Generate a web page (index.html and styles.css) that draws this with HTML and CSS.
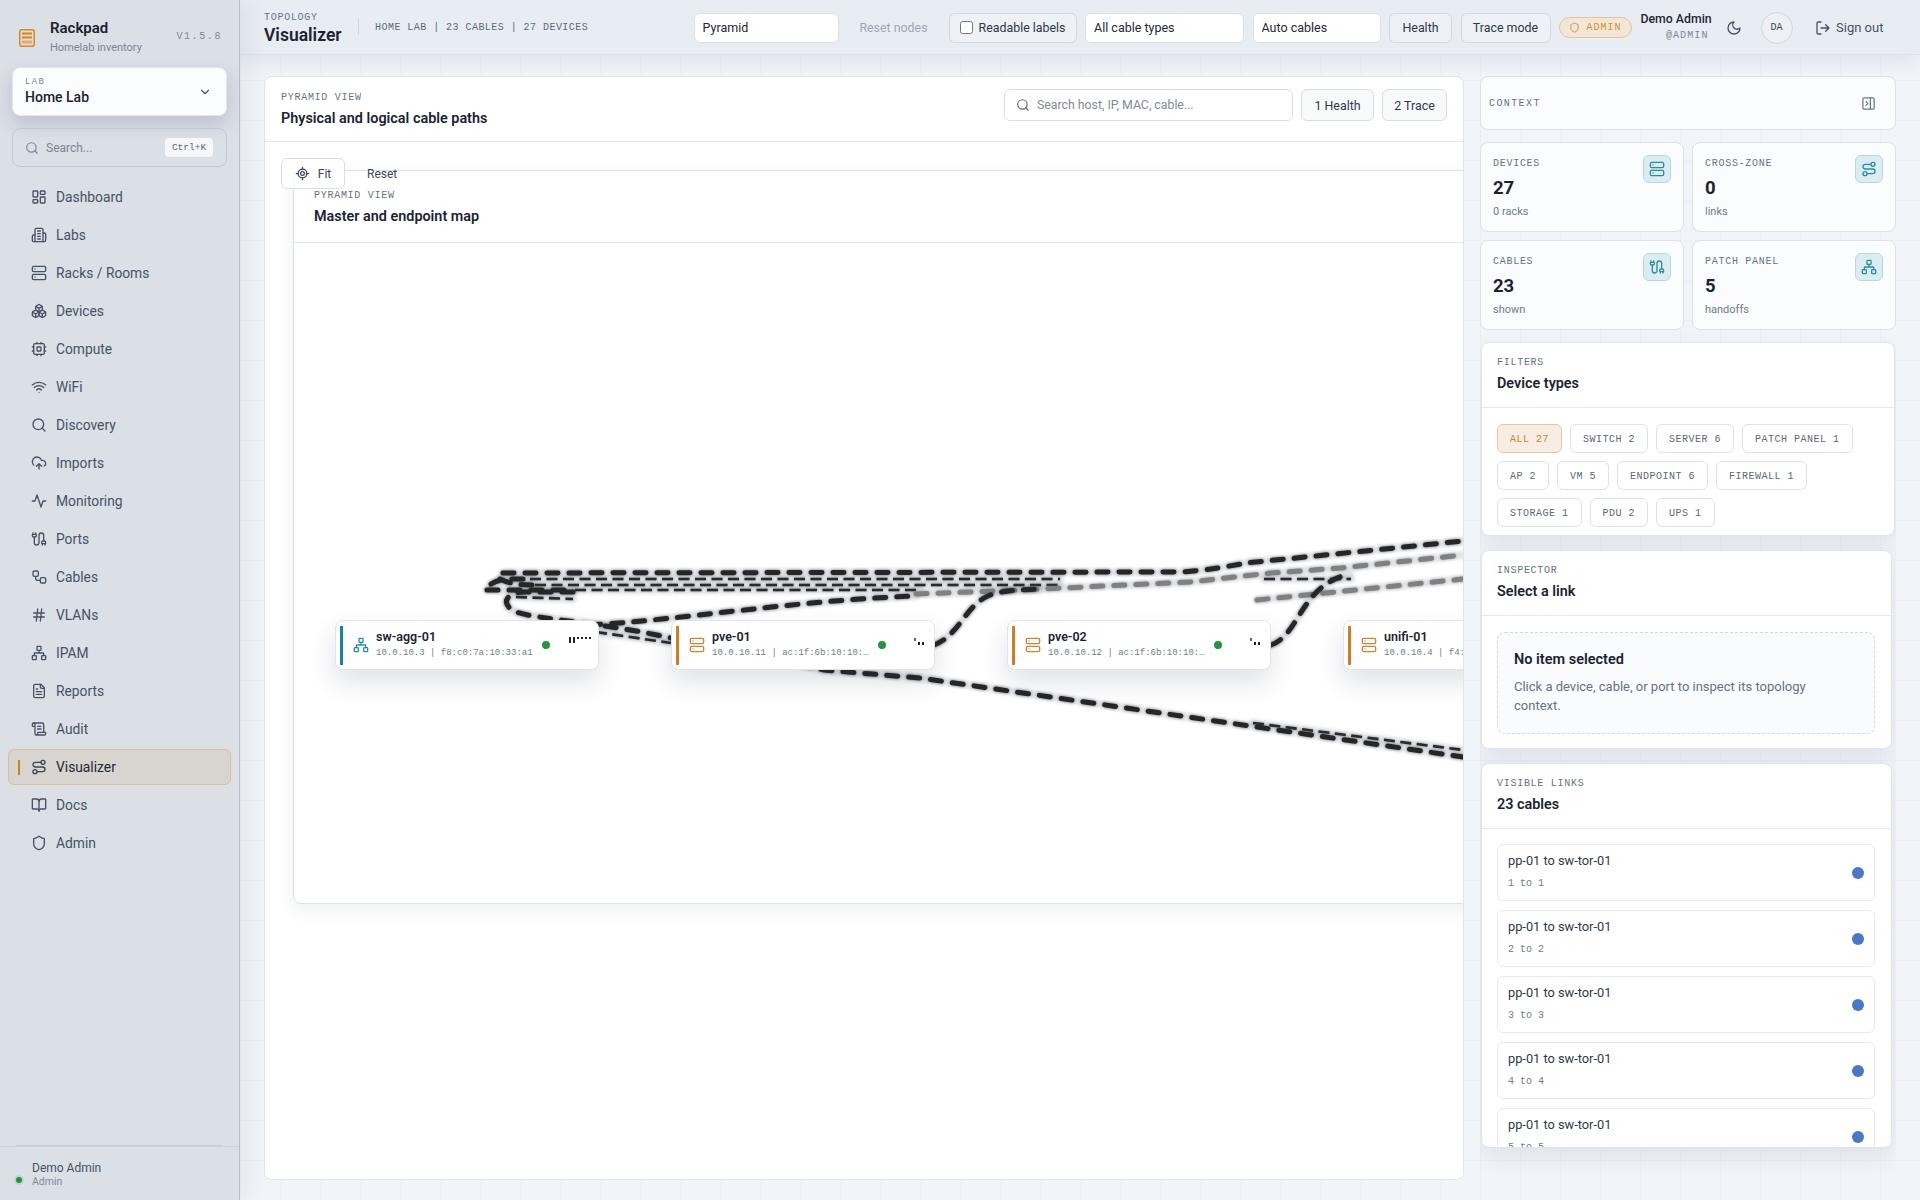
FILE: index.html
```html
<!DOCTYPE html>
<html lang="en">
<head>
<meta charset="utf-8">
<title>Rackpad - Visualizer</title>
<link rel="stylesheet" href="styles.css">
</head>
<body>
<svg class="defs" aria-hidden="true">
  <symbol id="i-dash" viewBox="0 0 24 24"><rect x="3" y="3" width="7" height="9" rx="1"/><rect x="14" y="3" width="7" height="5" rx="1"/><rect x="14" y="12" width="7" height="9" rx="1"/><rect x="3" y="16" width="7" height="5" rx="1"/></symbol>
  <symbol id="i-bld" viewBox="0 0 24 24"><path d="M6 22V4a2 2 0 0 1 2-2h8a2 2 0 0 1 2 2v18Z"/><path d="M6 12H4a2 2 0 0 0-2 2v6a2 2 0 0 0 2 2h2"/><path d="M18 9h2a2 2 0 0 1 2 2v9a2 2 0 0 1-2 2h-2"/><path d="M10 6h4M10 10h4M10 14h4M10 18h4"/></symbol>
  <symbol id="i-srv" viewBox="0 0 24 24"><rect x="2" y="2" width="20" height="8" rx="2"/><rect x="2" y="14" width="20" height="8" rx="2"/><path d="M6 6h.01M6 18h.01"/></symbol>
  <symbol id="i-box" viewBox="0 0 24 24"><path d="M2.97 12.92A2 2 0 0 0 2 14.63v3.24a2 2 0 0 0 .97 1.71l3 1.8a2 2 0 0 0 2.06 0L12 19v-5.5l-5-3-4.03 2.42Z"/><path d="m7 16.5-4.74-2.85M7 16.5l5-3M7 16.5v5.17"/><path d="M12 13.5V19l3.97 2.38a2 2 0 0 0 2.06 0l3-1.8a2 2 0 0 0 .97-1.71v-3.24a2 2 0 0 0-.97-1.71L17 10.5l-5 3Z"/><path d="m17 16.5-5-3M17 16.5l4.74-2.85M17 16.5v5.17"/><path d="M7.97 4.42A2 2 0 0 0 7 6.13v4.37l5 3 5-3V6.13a2 2 0 0 0-.97-1.71l-3-1.8a2 2 0 0 0-2.06 0l-3 1.8Z"/><path d="M12 8 7.26 5.15M12 8l4.74-2.85M12 13.5V8"/></symbol>
  <symbol id="i-cpu" viewBox="0 0 24 24"><rect x="4" y="4" width="16" height="16" rx="2"/><rect x="9" y="9" width="6" height="6" rx="1"/><path d="M15 2v2M15 20v2M2 15h2M2 9h2M20 15h2M20 9h2M9 2v2M9 20v2"/></symbol>
  <symbol id="i-wifi" viewBox="0 0 24 24"><path d="M12 20h.01M2 8.82a15 15 0 0 1 20 0M5 12.859a10 10 0 0 1 14 0M8.5 16.429a5 5 0 0 1 7 0"/></symbol>
  <symbol id="i-srch" viewBox="0 0 24 24"><circle cx="11" cy="11" r="8"/><path d="m21 21-4.3-4.3"/></symbol>
  <symbol id="i-up" viewBox="0 0 24 24"><path d="M12 13v8M4 14.899A7 7 0 1 1 15.71 8h1.79a4.5 4.5 0 0 1 2.5 8.242M8 17l4-4 4 4"/></symbol>
  <symbol id="i-act" viewBox="0 0 24 24"><path d="M22 12h-4l-3 9L9 3l-3 9H2"/></symbol>
  <symbol id="i-cable" viewBox="0 0 24 24"><path d="M17 21v-2a1 1 0 0 1-1-1v-1a2 2 0 0 1 2-2h2a2 2 0 0 1 2 2v1a1 1 0 0 1-1 1"/><path d="M19 15V6.5a1 1 0 0 0-7 0v11a1 1 0 0 1-7 0V9"/><path d="M21 21v-2h-4M3 5h4V3"/><path d="M7 5a1 1 0 0 1 1 1v1a2 2 0 0 1-2 2H4a2 2 0 0 1-2-2V6a1 1 0 0 1 1-1V3"/></symbol>
  <symbol id="i-link" viewBox="0 0 24 24"><rect x="3" y="3" width="8" height="8" rx="2"/><rect x="14" y="13" width="8" height="8" rx="2"/><path d="M7 11v3a3 3 0 0 0 3 3h4"/></symbol>
  <symbol id="i-hash" viewBox="0 0 24 24"><path d="M4 9h16M4 15h16M10 3 8 21M16 3l-2 18"/></symbol>
  <symbol id="i-net" viewBox="0 0 24 24"><rect x="16" y="16" width="6" height="6" rx="1"/><rect x="2" y="16" width="6" height="6" rx="1"/><rect x="9" y="2" width="6" height="6" rx="1"/><path d="M5 16v-3a1 1 0 0 1 1-1h12a1 1 0 0 1 1 1v3M12 12V8"/></symbol>
  <symbol id="i-file" viewBox="0 0 24 24"><path d="M15 2H6a2 2 0 0 0-2 2v16a2 2 0 0 0 2 2h12a2 2 0 0 0 2-2V7Z"/><path d="M14 2v4a2 2 0 0 0 2 2h4M10 9H8M16 13H8M16 17H8"/></symbol>
  <symbol id="i-scroll" viewBox="0 0 24 24"><path d="M15 12h-5M15 8h-5M19 17V5a2 2 0 0 0-2-2H4"/><path d="M8 21h12a2 2 0 0 0 2-2v-1a1 1 0 0 0-1-1H11a1 1 0 0 0-1 1v1a2 2 0 1 1-4 0V5a2 2 0 1 0-4 0v2a1 1 0 0 0 1 1h3"/></symbol>
  <symbol id="i-route" viewBox="0 0 24 24"><circle cx="6" cy="19" r="3"/><path d="M9 19h8.5a3.5 3.5 0 0 0 0-7h-11a3.5 3.5 0 0 1 0-7H15"/><circle cx="18" cy="5" r="3"/></symbol>
  <symbol id="i-book" viewBox="0 0 24 24"><path d="M12 7v14"/><path d="M3 18a1 1 0 0 1-1-1V4a1 1 0 0 1 1-1h5a4 4 0 0 1 4 4 4 4 0 0 1 4-4h5a1 1 0 0 1 1 1v13a1 1 0 0 1-1 1h-6a3 3 0 0 0-3 3 3 3 0 0 0-3-3z"/></symbol>
  <symbol id="i-shield" viewBox="0 0 24 24"><path d="M20 13c0 5-3.5 7.5-7.66 8.95a1 1 0 0 1-.67-.01C7.5 20.5 4 18 4 13V6a1 1 0 0 1 1-1c2 0 4.5-1.2 6.24-2.72a1.17 1.17 0 0 1 1.52 0C14.51 3.81 17 5 19 5a1 1 0 0 1 1 1z"/></symbol>
  <symbol id="i-fit" viewBox="0 0 24 24"><path d="M2 12h3M19 12h3M12 2v3M12 19v3"/><circle cx="12" cy="12" r="7"/><circle cx="12" cy="12" r="3"/></symbol>
  <symbol id="i-moon" viewBox="0 0 24 24"><path d="M12 3a6 6 0 0 0 9 9 9 9 0 1 1-9-9Z"/></symbol>
  <symbol id="i-out" viewBox="0 0 24 24"><path d="m16 17 5-5-5-5M21 12H9M9 21H5a2 2 0 0 1-2-2V5a2 2 0 0 1 2-2h4"/></symbol>
  <symbol id="i-panel" viewBox="0 0 24 24"><rect x="3" y="3" width="18" height="18" rx="2"/><path d="M15 3v18M8 9l3 3-3 3"/></symbol>
  <symbol id="i-chev" viewBox="0 0 24 24"><path d="m6 9 6 6 6-6"/></symbol>
</svg>

<div class="app">
  <aside class="sidebar">
    <div class="brand">
      <svg class="logo" viewBox="0 0 16 18"><rect x="0.75" y="0.75" width="14.5" height="16.5" rx="2" class="logo-box"/><rect x="3" y="3.5" width="10" height="2" class="logo-l1"/><rect x="3" y="7.5" width="10" height="2" class="logo-l1"/><rect x="3" y="11.5" width="10" height="3" class="logo-l2"/></svg>
      <div class="brand-text">
        <div class="brand-name">Rackpad</div>
        <div class="brand-sub">Homelab inventory</div>
      </div>
      <div class="version">V1.5.8</div>
    </div>
    <button class="lab-card" type="button">
      <span class="lab-text"><span class="lab-label">LAB</span><span class="lab-name">Home Lab</span></span>
      <svg class="ico ico-13"><use href="#i-chev"/></svg>
    </button>
    <div class="side-search">
      <svg class="ico ico-14"><use href="#i-srch"/></svg>
      <span class="side-search-text">Search...</span>
      <kbd class="kbd">Ctrl+K</kbd>
    </div>
    <nav class="nav">
      <a class="nav-item"><svg class="ico"><use href="#i-dash"/></svg>Dashboard</a>
      <a class="nav-item"><svg class="ico"><use href="#i-bld"/></svg>Labs</a>
      <a class="nav-item"><svg class="ico"><use href="#i-srv"/></svg>Racks / Rooms</a>
      <a class="nav-item"><svg class="ico"><use href="#i-box"/></svg>Devices</a>
      <a class="nav-item"><svg class="ico"><use href="#i-cpu"/></svg>Compute</a>
      <a class="nav-item"><svg class="ico"><use href="#i-wifi"/></svg>WiFi</a>
      <a class="nav-item"><svg class="ico"><use href="#i-srch"/></svg>Discovery</a>
      <a class="nav-item"><svg class="ico"><use href="#i-up"/></svg>Imports</a>
      <a class="nav-item"><svg class="ico"><use href="#i-act"/></svg>Monitoring</a>
      <a class="nav-item"><svg class="ico"><use href="#i-cable"/></svg>Ports</a>
      <a class="nav-item"><svg class="ico"><use href="#i-link"/></svg>Cables</a>
      <a class="nav-item"><svg class="ico"><use href="#i-hash"/></svg>VLANs</a>
      <a class="nav-item"><svg class="ico"><use href="#i-net"/></svg>IPAM</a>
      <a class="nav-item"><svg class="ico"><use href="#i-file"/></svg>Reports</a>
      <a class="nav-item"><svg class="ico"><use href="#i-scroll"/></svg>Audit</a>
      <a class="nav-item active"><svg class="ico"><use href="#i-route"/></svg>Visualizer</a>
      <a class="nav-item"><svg class="ico"><use href="#i-book"/></svg>Docs</a>
      <a class="nav-item"><svg class="ico"><use href="#i-shield"/></svg>Admin</a>
    </nav>
    <div class="foot-rule"></div>
    <div class="side-foot">
      <span class="foot-dot"></span>
      <div class="foot-text"><div class="foot-name">Demo Admin</div><div class="foot-role">Admin</div></div>
    </div>
  </aside>

  <div class="main">
    <header class="topbar">
      <div class="top-title">
        <div class="eyebrow">TOPOLOGY</div>
        <div class="page-name">Visualizer</div>
      </div>
      <div class="top-meta">HOME LAB | 23 CABLES | 27 DEVICES</div>
      <div class="top-controls">
        <select class="sel w-pyr"><option>Pyramid</option></select>
        <button class="ghost" type="button">Reset nodes</button>
        <label class="btn w-read"><input class="check" type="checkbox">Readable labels</label>
        <select class="sel w-types"><option>All cable types</option></select>
        <select class="sel w-auto"><option>Auto cables</option></select>
        <button class="btn w-health" type="button">Health</button>
        <button class="btn w-trace" type="button">Trace mode</button>
        <span class="role-badge"><svg class="ico ico-11"><use href="#i-shield"/></svg>ADMIN</span>
        <div class="user"><div class="user-name">Demo Admin</div><div class="user-at">@ADMIN</div></div>
        <button class="icon-btn" type="button"><svg class="ico"><use href="#i-moon"/></svg></button>
        <span class="avatar">DA</span>
        <button class="signout" type="button"><svg class="ico"><use href="#i-out"/></svg>Sign out</button>
      </div>
    </header>

    <div class="content">
      <section class="stage">
        <div class="stage-head">
          <div class="stage-heading">
            <div class="eyebrow">PYRAMID VIEW</div>
            <h2 class="panel-title">Physical and logical cable paths</h2>
          </div>
          <div class="stage-tools">
            <div class="stage-search"><svg class="ico ico-14"><use href="#i-srch"/></svg><span>Search host, IP, MAC, cable...</span></div>
            <button class="btn-light w-h1" type="button">1 Health</button>
            <button class="btn-light w-h2" type="button">2 Trace</button>
          </div>
        </div>
        <div class="canvas">
          <div class="map-panel">
            <div class="map-head">
              <div class="eyebrow">PYRAMID VIEW</div>
              <h3 class="panel-title">Master and endpoint map</h3>
            </div>
          </div>

          <svg class="cables" viewBox="265 142 1198 1037">
            <defs>
              <path id="c1" d="M503 573L1180 572C1210 570 1230 566 1246 563L1355 552L1463 541"/>
              <path id="c2" d="M530 579L1060 579"/>
              <path id="c2b" d="M1264 579L1351 579"/>
              <path id="c3" d="M535 585L1060 585"/>
              <path id="f1" d="M491 584C500 578 510 579 530 579"/>
              <path id="f2" d="M500 579C510 584 520 585 535 585"/>
              <path id="c4" d="M487 590L575 590"/>
              <path id="c4b" d="M575 590L920 590"/>
              <path id="c5" d="M573 592L525 592C505 592 500 605 516 612C540 620 600 622 671 638L824 670L920 678L1463 757"/>
              <path id="c5b" d="M516 597L573 599"/>
              <path id="c6" d="M596 632L671 643"/>
              <path id="c6b" d="M1253 723L1463 750"/>
              <path id="c7" d="M590 625C680 620 800 600 916 596"/>
              <path id="c8" d="M934 645C960 635 965 605 990 595C1005 590 1020 590 1040 589"/>
              <path id="c9" d="M1271 645C1300 635 1300 585 1350 574"/>
              <path id="g1" d="M916 594L1020 590L1190 582L1271 573L1341 568L1463 555"/>
              <path id="g2" d="M1257 600L1463 579"/>
            </defs>
            <g class="halo">
              <use href="#c1"/><use href="#c2"/><use href="#c2b"/><use href="#c3"/><use href="#f1"/><use href="#f2"/><use href="#c4"/><use href="#c4b"/><use href="#c5"/><use href="#c5b"/><use href="#c6"/><use href="#c6b"/><use href="#c7"/><use href="#c8"/><use href="#c9"/><use href="#g1"/><use href="#g2"/>
            </g>
            <g class="wire-thin">
              <use href="#c2"/><use href="#c2b"/><use href="#c3"/><use href="#c4b"/><use href="#c5b"/><use href="#c6"/><use href="#c6b"/>
            </g>
            <g class="wire-gray">
              <use href="#g1"/><use href="#g2"/>
            </g>
            <g class="wire">
              <use href="#c1"/><use href="#f1"/><use href="#f2"/><use href="#c4"/><use href="#c5"/><use href="#c7"/><use href="#c8"/><use href="#c9"/>
            </g>
          </svg>

          <div class="node n1 teal">
            <span class="node-bar"></span>
            <svg class="ico node-ico"><use href="#i-net"/></svg>
            <div class="node-body"><div class="node-name">sw-agg-01</div><div class="node-sub">10.0.10.3 | f8:c0:7a:10:33:a1</div></div>
            <span class="node-dot"></span>
            <svg class="ticks" viewBox="0 0 24 8"><path class="tick-l" d="M1 0v6M5 0v6"/><path class="tick-s" d="M9 0v2M13 0v2M17 0v2M21 0v2"/></svg>
          </div>
          <div class="node n2 amber">
            <span class="node-bar"></span>
            <svg class="ico node-ico"><use href="#i-srv"/></svg>
            <div class="node-body"><div class="node-name">pve-01</div><div class="node-sub">10.0.10.11 | ac:1f:6b:10:10:10</div></div>
            <span class="node-dot"></span>
            <svg class="ticks ticks-s" viewBox="0 0 14 8"><path class="tick-g" d="M1 1.5h2"/><path class="tick-l" d="M6 4v3M10 4v3"/></svg>
          </div>
          <div class="node n3 amber">
            <span class="node-bar"></span>
            <svg class="ico node-ico"><use href="#i-srv"/></svg>
            <div class="node-body"><div class="node-name">pve-02</div><div class="node-sub">10.0.10.12 | ac:1f:6b:10:10:11</div></div>
            <span class="node-dot"></span>
            <svg class="ticks ticks-s" viewBox="0 0 14 8"><path class="tick-g" d="M1 1.5h2"/><path class="tick-l" d="M6 4v3M10 4v3"/></svg>
          </div>
          <div class="node n4 amber">
            <span class="node-bar"></span>
            <svg class="ico node-ico"><use href="#i-srv"/></svg>
            <div class="node-body"><div class="node-name">unifi-01</div><div class="node-sub">10.0.10.4 | f4:92:bf:10:10:04</div></div>
            <span class="node-dot"></span>
          </div>

          <div class="zoom-tools">
            <button class="fit" type="button"><svg class="ico ico-15"><use href="#i-fit"/></svg>Fit</button>
            <button class="reset" type="button">Reset</button>
          </div>
        </div>
      </section>

      <aside class="rail">
        <div class="context"><span class="context-label">CONTEXT</span><svg class="ico ico-15"><use href="#i-panel"/></svg></div>
        <div class="stats">
          <div class="stat"><div class="stat-label">DEVICES</div><div class="stat-value">27</div><div class="stat-sub">0 racks</div><span class="stat-ico"><svg class="ico"><use href="#i-srv"/></svg></span></div>
          <div class="stat"><div class="stat-label">CROSS-ZONE</div><div class="stat-value">0</div><div class="stat-sub">links</div><span class="stat-ico"><svg class="ico"><use href="#i-route"/></svg></span></div>
          <div class="stat"><div class="stat-label">CABLES</div><div class="stat-value">23</div><div class="stat-sub">shown</div><span class="stat-ico"><svg class="ico"><use href="#i-cable"/></svg></span></div>
          <div class="stat"><div class="stat-label">PATCH PANEL</div><div class="stat-value">5</div><div class="stat-sub">handoffs</div><span class="stat-ico"><svg class="ico"><use href="#i-net"/></svg></span></div>
        </div>

        <section class="panel panel-filters">
          <div class="panel-head"><div class="eyebrow">FILTERS</div><h3 class="panel-title">Device types</h3></div>
          <div class="chips">
            <span class="chip on">ALL 27</span><span class="chip">SWITCH 2</span><span class="chip">SERVER 6</span><span class="chip">PATCH PANEL 1</span>
            <span class="chip">AP 2</span><span class="chip">VM 5</span><span class="chip">ENDPOINT 6</span><span class="chip">FIREWALL 1</span>
            <span class="chip">STORAGE 1</span><span class="chip">PDU 2</span><span class="chip">UPS 1</span>
          </div>
        </section>

        <section class="panel panel-narrow panel-inspect">
          <div class="panel-head"><div class="eyebrow">INSPECTOR</div><h3 class="panel-title">Select a link</h3></div>
          <div class="inspect-body">
            <div class="empty">
              <div class="empty-title">No item selected</div>
              <p class="empty-text">Click a device, cable, or port to inspect its topology context.</p>
            </div>
          </div>
        </section>

        <section class="panel panel-narrow panel-links">
          <div class="panel-head"><div class="eyebrow">VISIBLE LINKS</div><h3 class="panel-title">23 cables</h3></div>
          <div class="links">
            <div class="link"><div class="link-text"><div class="link-name">pp-01 to sw-tor-01</div><div class="link-sub">1 to 1</div></div><span class="link-dot"></span></div>
            <div class="link"><div class="link-text"><div class="link-name">pp-01 to sw-tor-01</div><div class="link-sub">2 to 2</div></div><span class="link-dot"></span></div>
            <div class="link"><div class="link-text"><div class="link-name">pp-01 to sw-tor-01</div><div class="link-sub">3 to 3</div></div><span class="link-dot"></span></div>
            <div class="link"><div class="link-text"><div class="link-name">pp-01 to sw-tor-01</div><div class="link-sub">4 to 4</div></div><span class="link-dot"></span></div>
            <div class="link"><div class="link-text"><div class="link-name">pp-01 to sw-tor-01</div><div class="link-sub">5 to 5</div></div><span class="link-dot"></span></div>
          </div>
        </section>
      </aside>
    </div>
  </div>
</div>
</body>
</html>
```

FILE: styles.css
```css
* { box-sizing: border-box; }
html, body { margin: 0; height: 100%; }
body {
  width: 1920px; height: 1200px; overflow: hidden;
  font-family: Roboto, "Noto Sans", sans-serif;
  color: #1a2230;
  background-color: #f1f4f9;
  background-image:
    linear-gradient(rgba(40, 60, 90, .022) 1px, transparent 1px),
    linear-gradient(90deg, rgba(40, 60, 90, .022) 1px, transparent 1px);
  background-size: 40px 40px;
}
button, select, input { font-family: inherit; }
h2, h3, p { margin: 0; }
.defs { position: absolute; width: 0; height: 0; }
.ico {
  width: 16px; height: 16px; flex: none;
  fill: none; stroke: currentColor; stroke-width: 2;
  stroke-linecap: round; stroke-linejoin: round;
}
.ico-11 { width: 11px; height: 11px; }
.ico-13 { width: 14px; height: 14px; }
.ico-14 { width: 14px; height: 14px; }
.ico-15 { width: 15px; height: 15px; }

.app { display: flex; width: 1920px; height: 1200px; }

/* Sidebar */
.sidebar {
  width: 240px; flex: none; height: 1200px;
  display: flex; flex-direction: column;
  background: #dbdfe6;
  border-right: 1px solid #b9bfc9;
  box-shadow: 6px 0 24px rgba(30, 45, 70, .07);
  position: relative; z-index: 2;
}
.brand { height: 67px; display: flex; align-items: center; padding: 6px 17px 0 19px; }
.logo { width: 16px; height: 18px; flex: none; margin-right: 15px; margin-top: 2px; }
.logo-box { fill: #ecd9c1; stroke: #d08a34; stroke-width: 1.5; }
.logo-l1 { fill: #c9852f; }
.logo-l2 { fill: #dcae74; }
.brand-text { flex: 1; }
.brand-name { font-size: 15px; font-weight: 600; line-height: 20px; color: #1b2330; }
.brand-sub { font-size: 11px; line-height: 14px; margin-top: 3px; color: #7b8594; }
.version { font-family: "Liberation Mono", monospace; font-size: 10px; letter-spacing: 1.6px; color: #7f8997; margin-top: -1px; }
.lab-card {
  width: 215px; height: 49px; margin-left: 12px; padding: 0 14px 0 12px;
  display: flex; align-items: center; justify-content: space-between;
  background: #fbfcfe; border: 1px solid #e2e5eb; border-radius: 8px;
  box-shadow: 0 8px 18px rgba(30, 45, 70, .16);
  color: #465264; text-align: left;
}
.lab-text { display: flex; flex-direction: column; }
.lab-label { font-family: "Liberation Mono", monospace; font-size: 9px; letter-spacing: 1.3px; color: #7b8594; line-height: 11px; }
.lab-name { font-size: 14px; font-weight: 500; color: #1b2330; line-height: 18px; margin-top: 0; }
.side-search {
  width: 215px; height: 39px; margin: 12px 0 0 12px; padding: 0 13px 0 12px;
  display: flex; align-items: center; gap: 7px;
  border: 1px solid #c3c9d3; border-radius: 8px; color: #7b8594;
}
.side-search-text { flex: 1; font-size: 12px; color: #7b8594; }
.kbd {
  width: 48px; height: 19px; background: #f6f7fa; border-radius: 4px;
  font-family: "Liberation Mono", monospace; font-size: 9.5px; line-height: 19px;
  text-align: center; color: #5d6878;
}
.nav { display: flex; flex-direction: column; gap: 2px; margin: 12px 0 0 8px; width: 223px; }
.nav-item {
  position: relative; height: 36px; padding-left: 22px;
  display: flex; align-items: center; gap: 9px;
  font-size: 13.8px; color: #465264; border: 1px solid transparent; border-radius: 6px;
}
.nav-item.active { background: #d8d4d0; border-color: #e0bd92; color: #1f2733; }
.nav-item.active .ico { color: #3b4656; }
.nav-item.active::before {
  content: ""; position: absolute; left: 9px; top: 10px; width: 2px; height: 15px; background: #c97f26;
}
.foot-rule { flex: none; margin: auto 16px 0; height: 1px; background: #c6cbd4; }
.side-foot {
  height: 54px; padding: 13px 0 0 15px;
  display: flex; align-items: center; gap: 9px; align-self: stretch;
  border-top: 1px solid #ced2da;
}
.foot-dot { width: 6px; height: 6px; margin: 0 0 0 1px; border-radius: 50%; background: #27923f; box-shadow: 0 0 0 2px rgba(39, 146, 63, .14); }
.foot-text { margin-top: -12px; margin-left: 1px; }
.foot-name { font-size: 12px; line-height: 14px; color: #465264; }
.foot-role { font-size: 10.5px; line-height: 13px; color: #7f8997; }

/* Main */
.main { flex: 1; min-width: 0; display: flex; flex-direction: column; }
.topbar {
  height: 55px; flex: none; padding: 1px 23px 0 24px;
  display: flex; align-items: center;
  background: #e8edf4; border-bottom: 1px solid #dde2ea;
  box-shadow: 0 6px 20px rgba(30, 45, 70, .09);
  position: relative; z-index: 1;
}
.eyebrow { font-family: "Liberation Mono", monospace; font-size: 10px; letter-spacing: .72px; color: #677283; line-height: 12px; }
.top-title { width: 94px; flex: none; padding-top: 3px; }
.page-name { font-size: 17.5px; font-weight: 600; line-height: 22px; margin-top: 0; color: #1b2330; }
.top-meta {
  flex: none; padding-left: 16px; height: 16px; line-height: 18px;
  border-left: 1px solid #cfd5de; margin-top: -1px;
  font-family: "Liberation Mono", monospace; font-size: 10px; letter-spacing: .46px; color: #5d6878;
  white-space: nowrap;
}
.top-controls { margin-left: auto; display: flex; align-items: center; gap: 8.5px; }
.sel {
  appearance: none; height: 30px; padding: 0 8px;
  background: #fff; border: 1px solid #dbe0e8; border-radius: 6px;
  font-size: 12.5px; color: #1f2733;
}
.w-pyr { width: 145px; }
.w-types { width: 159px; }
.w-auto { width: 128px; }
.ghost { width: 93px; height: 30px; border: 0; background: none; padding: 0; font-size: 12.4px; color: #a0a7b3; }
.btn {
  height: 30px; display: flex; align-items: center; justify-content: center;
  background: #eef1f6; border: 1px solid #d3d8e1; border-radius: 6px;
  font-size: 12.4px; color: #2f3948;
}
.w-read { width: 128px; gap: 6px; }
.w-health { width: 63px; }
.w-trace { width: 90px; }
.check { width: 13px; height: 13px; margin: 0; }
.role-badge {
  width: 73px; height: 21px; display: flex; align-items: center; justify-content: center; gap: 6px;
  background: #f2e6d7; border: 1px solid #e6c297; border-radius: 11px;
  font-family: "Liberation Mono", monospace; font-size: 10px; letter-spacing: 1px; color: #d48e34;
}
.user { width: 67px; text-align: right; white-space: nowrap; }
.user-name { font-size: 12.3px; line-height: 15px; font-weight: 500; color: #1f2733; }
.user-at { font-family: "Liberation Mono", monospace; font-size: 10px; line-height: 14px; margin-top: 2px; letter-spacing: 1.1px; margin-right: -1px; color: #7b8594; }
.icon-btn { width: 36px; height: 32px; border: 0; background: none; padding: 0; display: flex; align-items: center; justify-content: center; color: #465264; }
.avatar {
  width: 32px; height: 32px; border-radius: 50%; border: 1px solid #cfd5de; background: #edf0f5;
  display: flex; align-items: center; justify-content: center;
  font-family: "Liberation Mono", monospace; font-size: 10px; color: #3b4656;
}
.signout { width: 96px; height: 30px; border: 0; background: none; padding: 0 0 0 14px; display: flex; align-items: center; gap: 5px; font-size: 13px; color: #465264; white-space: nowrap; }

.content { flex: 1; min-height: 0; display: flex; gap: 16px; padding: 21px 24px 20px; }

/* Stage */
.stage {
  width: 1200px; flex: none; display: flex; flex-direction: column;
  background: #fff; border: 1px solid #e1e5eb; border-radius: 8px; overflow: hidden;
}
.stage-head {
  height: 65px; flex: none; padding: 12px 16px 0 16px;
  display: flex; align-items: flex-start; justify-content: space-between;
  border-bottom: 1px solid #e4e7ec;
}
.stage-heading { padding-top: 3px; }
.panel-title { font-size: 14.4px; font-weight: 600; line-height: 18px; margin-top: 6px; color: #1b2330; }
.stage-tools { display: flex; align-items: center; gap: 8px; }
.stage-search {
  width: 289px; height: 32px; padding: 0 11px; display: flex; align-items: center; gap: 7px;
  background: #fff; border: 1px solid #d9dee6; border-radius: 6px; color: #5d6878; font-size: 12.3px;
}
.stage-search span { color: #7f8997; }
.btn-light {
  height: 32px; padding: 0; background: #f8f9fb; border: 1px solid #d9dee6; border-radius: 6px;
  font-size: 12.4px; color: #2f3948;
}
.w-h1 { width: 73px; }
.w-h2 { width: 65px; }

.canvas { position: relative; flex: 1; min-height: 0; overflow: hidden; background: #fff; }
.map-panel {
  position: absolute; left: 28px; top: 28px; width: 1400px; height: 734px;
  background: #fff; border: 1px solid #dde1e8; border-radius: 8px;
  box-shadow: 0 6px 18px rgba(30, 45, 70, .08);
}
.map-head { height: 72px; padding: 19px 20px 0; border-bottom: 1px solid #e6e9ee; }
.cables { position: absolute; left: 0; top: 0; width: 1198px; height: 1037px; fill: none; }
.halo { stroke: rgba(140, 148, 160, .24); stroke-width: 8; stroke-linecap: round; filter: blur(1.4px); }
.wire { stroke: #262626; stroke-width: 5; stroke-dasharray: 11 11; stroke-linecap: round; filter: drop-shadow(0 0 1.5px rgba(50, 55, 65, .65)); }
.wire-thin { stroke: #2a2a2a; stroke-width: 2.6; stroke-dasharray: 11 5.5; filter: drop-shadow(0 0 1.2px rgba(50, 55, 65, .55)); }
.wire-gray { stroke: #808080; stroke-width: 5; stroke-dasharray: 11 11; stroke-linecap: round; filter: drop-shadow(0 0 1.5px rgba(110, 115, 125, .6)); }

.node {
  position: absolute; top: 478px; width: 264px; height: 50px;
  display: flex; align-items: center; padding-left: 17px;
  background: #fff; border: 1px solid #e1e4ea; border-radius: 8px;
  box-shadow: 0 12px 26px rgba(30, 45, 70, .14);
}
.n1 { left: 70px; }
.n2 { left: 406px; }
.n3 { left: 742px; }
.n4 { left: 1078px; }
.node-bar { position: absolute; left: 4px; top: 5px; bottom: 4px; width: 2.5px; }
.teal .node-bar { background: #1f8398; }
.amber .node-bar { background: #c97f26; }
.node-ico { width: 16px; height: 16px; }
.teal .node-ico { color: #2d8ca5; }
.amber .node-ico { color: #cb8433; }
.node-body { width: 157px; margin-left: 7px; margin-top: -2px; min-width: 0; flex: none; }
.node-name { font-size: 12.5px; font-weight: 600; line-height: 15px; color: #1b2330; }
.node-sub {
  font-family: "Liberation Mono", monospace; font-size: 9px; line-height: 12px; margin-top: 3px; color: #707b8b;
  white-space: nowrap; overflow: hidden; text-overflow: ellipsis;
}
.node-dot { width: 8px; height: 8px; border-radius: 50%; background: #27923f; margin-left: 9px; flex: none; }
.ticks { position: absolute; left: 233px; top: 16px; width: 24px; height: 8px; fill: none; }
.ticks-s { left: 241px; top: 17px; width: 14px; height: 8px; }
.tick-l { stroke: #222; stroke-width: 2; }
.tick-s { stroke: #222; stroke-width: 2; }
.tick-g { stroke: #666; stroke-width: 3; }

.zoom-tools { position: absolute; left: 16px; top: 16px; display: flex; align-items: center; gap: 22px; }
.fit {
  width: 64px; height: 31px; display: flex; align-items: center; justify-content: center; gap: 8px; padding: 0;
  background: rgba(255, 255, 255, .85); border: 1px solid #d9dee6; border-radius: 6px;
  font-size: 12px; color: #3b4656;
}
.reset { border: 0; background: none; padding: 0; font-size: 12px; color: #3b4656; }

/* Rail */
.rail { width: 416px; flex: none; height: 1103px; overflow: hidden; display: flex; flex-direction: column; }
.context {
  height: 54px; flex: none; padding: 0 19px 0 8px;
  display: flex; align-items: center; justify-content: space-between;
  background: #fbfcfe; border: 1px solid #dde1e8; border-radius: 8px; color: #6c7788;
}
.context-label { font-family: "Liberation Mono", monospace; font-size: 10px; letter-spacing: 1.4px; color: #677283; }
.stats { display: grid; grid-template-columns: 1fr 1fr; gap: 8px; margin-top: 12px; }
.stat {
  position: relative; height: 90px; padding: 15px 12px;
  background: #fbfcfe; border: 1px solid #dde1e8; border-radius: 8px;
}
.stat-label { font-family: "Liberation Mono", monospace; font-size: 10px; letter-spacing: .72px; line-height: 12px; color: #677283; }
.stat-value { font-size: 18.5px; font-weight: 700; line-height: 22px; margin-top: 7px; color: #1b2330; }
.stat-sub { font-size: 11px; line-height: 14px; margin-top: 6px; color: #707b8b; }
.stat-ico {
  position: absolute; right: 12px; top: 12px; width: 28px; height: 28px;
  display: flex; align-items: center; justify-content: center;
  background: #dcedf1; border: 1px solid #b5d8df; border-radius: 6px; color: #2d8ca5;
}
.panel {
  flex: none; margin-left: 1px; background: #fff; border: 1px solid #e1e5eb; border-radius: 8px;
  overflow: hidden; box-shadow: 0 8px 24px rgba(30, 45, 70, .09);
}
.panel-filters { width: 414px; height: 194px; margin-top: 12px; }
.panel-narrow { width: 411px; }
.panel-inspect { height: 199px; margin-top: 14px; }
.panel-links { height: 385px; margin-top: 14px; }
.panel-head { height: 65px; padding: 14px 15px 0; border-bottom: 1px solid #e6e9ee; }
.chips { display: flex; flex-wrap: wrap; gap: 8px; padding: 16px 15px 0; }
.chip {
  height: 29px; padding: 1px 12px 0; display: flex; align-items: center; white-space: pre;
  background: #fff; border: 1px solid #dde1e8; border-radius: 6px;
  font-family: "Liberation Mono", monospace; font-size: 10px; letter-spacing: .5px; color: #5d6878;
}
.chip.on { background: #f7ede2; border-color: #ebc69a; color: #cb8328; }
.inspect-body { padding: 16px 15px; }
.empty { width: 378px; height: 102px; padding: 18px 40px 0 16px; background: #fafbfd; border: 1px dashed #d3d8e0; border-radius: 8px; }
.empty-title { font-size: 14.5px; font-weight: 600; line-height: 18px; color: #1b2330; }
.empty-text { font-size: 13px; line-height: 19px; margin-top: 8px; color: #677283; }
.links { display: flex; flex-direction: column; gap: 9px; padding: 15px 15px; }
.link {
  width: 378px; height: 57px; flex: none; padding: 0 10px 0 10px;
  display: flex; align-items: center; justify-content: space-between;
  border: 1px solid #e6e9ee; border-radius: 6px;
}
.link-text { padding-bottom: 2px; }
.link-name { font-size: 12.8px; line-height: 16px; color: #2f3948; }
.link-sub { font-family: "Liberation Mono", monospace; font-size: 10px; line-height: 12px; margin-top: 9px; color: #707b8b; }
.link-dot { width: 12px; height: 12px; border-radius: 50%; background: #4a78c4; }
```
